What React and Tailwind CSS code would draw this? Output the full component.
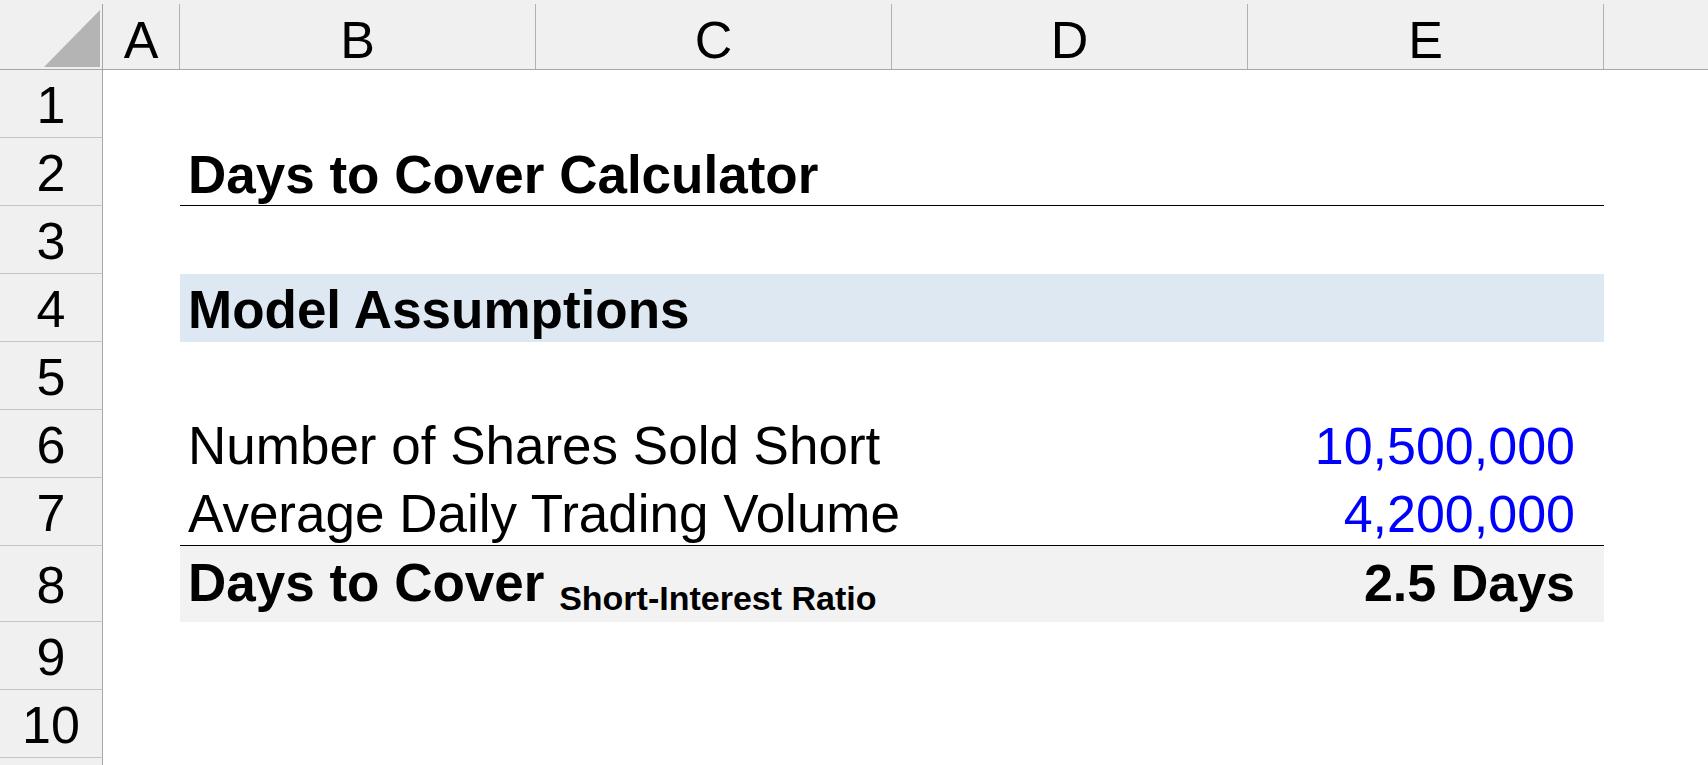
import React from 'react';

const columns = [
    { label: 'A', width: 'w-[77px]' },
    { label: 'B', width: 'w-[356px]' },
    { label: 'C', width: 'w-[356px]' },
    { label: 'D', width: 'w-[356px]' },
    { label: 'E', width: 'w-[356px]' },
];

function RowHeader({ n, tall }) {
    return (
        <div
            className={`w-[103px] shrink-0 ${tall ? 'h-[76px]' : 'h-[68px]'} bg-[#f0f0f0] border-r border-r-[#a6a6a6] border-b border-b-[#c4c4c4] flex items-center justify-center leading-normal pt-[2px]`}
        >
            {n}
        </div>
    );
}

function Row({ n, tall, children }) {
    return (
        <div className="flex">
            <RowHeader n={n} tall={tall} />
            <div className="w-[77px] shrink-0" />
            <div className="w-[1424px] shrink-0 flex">{children}</div>
        </div>
    );
}

export default function App() {
    return (
        <div
            className="h-screen overflow-hidden bg-white text-black text-[52px]"
            style={{ fontFamily: '"Liberation Sans", Arial, sans-serif' }}
        >
            {/* column headers */}
            <div className="flex h-[70px] bg-[#f0f0f0] border-b border-b-[#a6a6a6] pt-[4px]">
                <div className="w-[103px] shrink-0 border-r border-r-[#a6a6a6] flex items-end justify-end pr-[2px] pb-[2px]">
                    <svg width="56" height="57" viewBox="0 0 56 57">
                        <polygon points="0,57 56,57 56,0" fill="#b4b4b4" />
                    </svg>
                </div>
                {columns.map((c) => (
                    <div
                        key={c.label}
                        className={`${c.width} shrink-0 border-r border-r-[#b0b0b0] flex items-end justify-center leading-[44px] pb-[7px]`}
                    >
                        {c.label}
                    </div>
                ))}
                <div className="flex-1" />
            </div>

            <Row n={1} />

            <Row n={2}>
                <div className="flex-1 h-[68px] border-b border-b-black flex items-end pl-[8px] pb-[8px] font-bold text-[53px] leading-[44px]">
                    Days to Cover Calculator
                </div>
            </Row>

            <Row n={3} />

            <Row n={4}>
                <div className="flex-1 h-[68px] bg-[#dee8f2] flex items-end pl-[8px] pb-[10px] font-bold text-[53px] leading-[44px]">
                    Model Assumptions
                </div>
            </Row>

            <Row n={5} />

            <Row n={6}>
                <div className="flex-1 h-[68px] flex items-end justify-between pl-[8px] pr-[29px] pb-[10px] leading-[44px]">
                    <span className="text-[53px]">Number of Shares Sold Short</span>
                    <span className="text-[#0000ff]">10,500,000</span>
                </div>
            </Row>

            <Row n={7}>
                <div className="flex-1 h-[68px] border-b border-b-black flex items-end justify-between pl-[8px] pr-[29px] pb-[9px] leading-[44px]">
                    <span className="text-[53px]">Average Daily Trading Volume</span>
                    <span className="text-[#0000ff]">4,200,000</span>
                </div>
            </Row>

            <Row n={8} tall>
                <div className="flex-1 h-[76px] bg-[#f2f2f2] flex items-end pl-[8px] pr-[29px] pb-[7px] font-bold leading-[44px]">
                    <div className="w-full flex items-baseline justify-between">
                        <span className="text-[53px]">
                            Days to Cover{' '}
                            <span className="text-[34px] leading-none align-[-9px]">Short-Interest Ratio</span>
                        </span>
                        <span>2.5 Days</span>
                    </div>
                </div>
            </Row>

            <Row n={9} />
            <Row n={10} />
            <Row n={null} />
        </div>
    );
}
